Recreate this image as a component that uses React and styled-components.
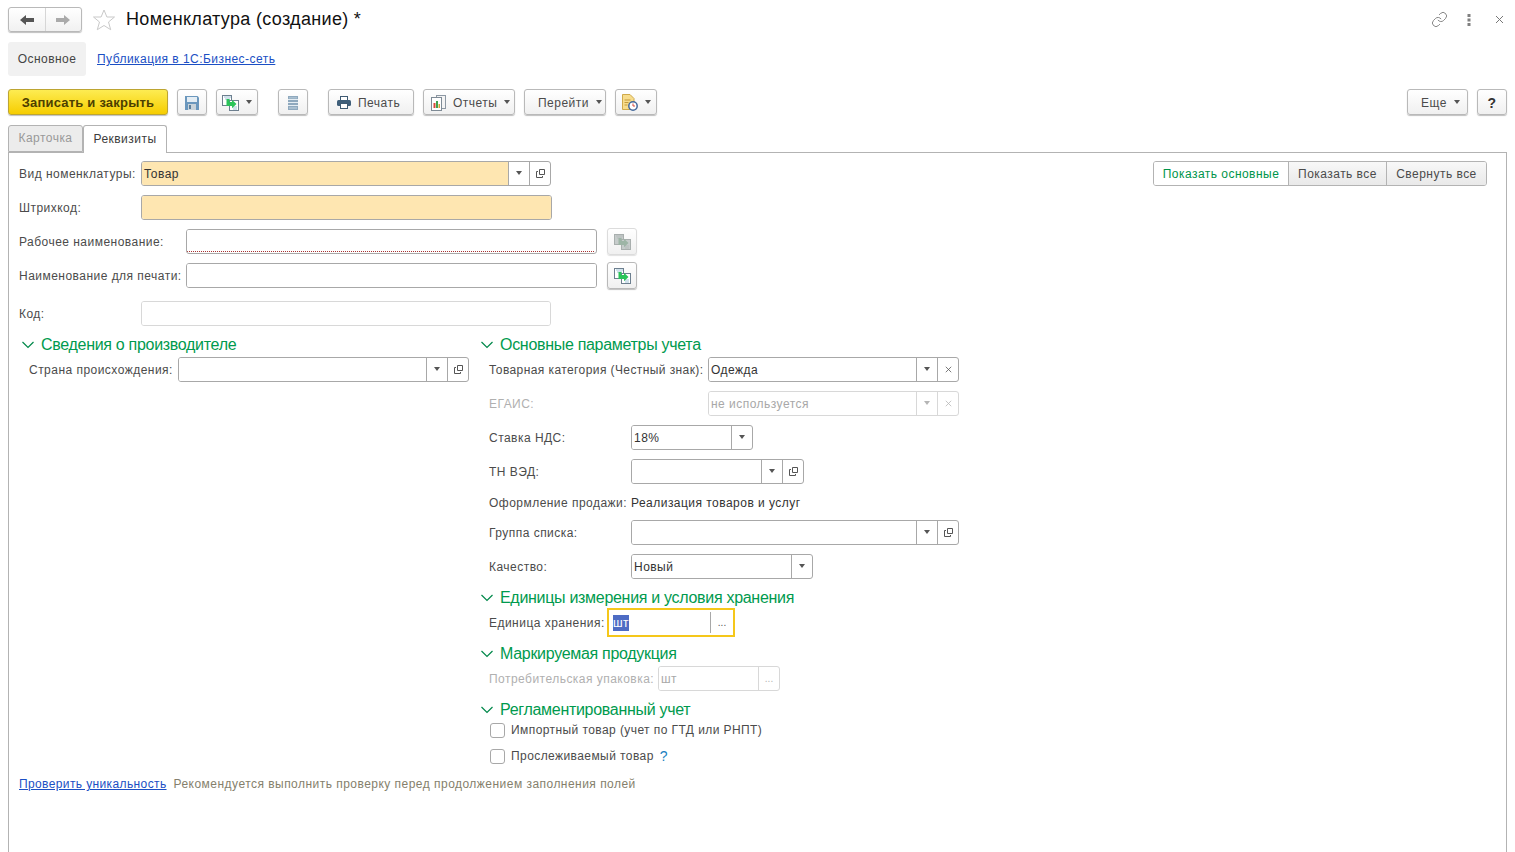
import React from "react";
import styled, { createGlobalStyle } from "styled-components";
import { Link } from "lucide-react";

const GlobalStyle = createGlobalStyle`
  html, body {
    margin: 0;
    height: 100%;
    background: #fff;
    overflow: hidden;
  }
  body {
    font-family: "Liberation Sans", Arial, sans-serif;
    font-size: 12px;
    letter-spacing: 0.47px;
    color: #4b4b4b;
  }
`;

const Page = styled.div`
  height: 852px;
  padding: 0 8px;
  box-sizing: border-box;
  display: flex;
  flex-direction: column;
`;

const Header = styled.div`
  display: flex;
  align-items: center;
  height: 25px;
  margin-top: 7px;
`;

const NavGroup = styled.div`
  display: flex;
  width: 74px;
  height: 25px;
  box-sizing: border-box;
  border: 1px solid #b9b9b9;
  border-radius: 3px;
  background: linear-gradient(#fff, #f1f1f1);
  box-shadow: 0 1px 1px rgba(0, 0, 0, 0.25);
`;

const NavButton = styled.div`
  flex: 1;
  display: flex;
  align-items: center;
  justify-content: center;
  & + & {
    border-left: 1px solid #d6d6d6;
  }
`;

const StarWrap = styled.div`
  display: flex;
  margin-left: 10px;
`;

const Title = styled.h1`
  margin: 0 0 0 10px;
  font-size: 18px;
  font-weight: 400;
  letter-spacing: 0.32px;
  color: #111;
`;

const WindowIcons = styled.div`
  margin-left: auto;
  margin-right: -7px;
  display: flex;
`;

const WindowIcon = styled.div`
  width: 30px;
  display: flex;
  align-items: center;
  justify-content: center;
`;

const SectionNav = styled.div`
  display: flex;
  align-items: center;
  height: 34px;
  margin-top: 10px;
`;

const SectionTab = styled.div`
  width: 78px;
  height: 34px;
  display: flex;
  align-items: center;
  justify-content: center;
  background: #f1f1f1;
  border-radius: 3px;
  color: #444;
`;

const TextLink = styled.a`
  color: #1b4fc4;
  text-decoration: underline;
  margin-left: ${(p) => p.$left || 0}px;
  white-space: nowrap;
  letter-spacing: ${(p) => p.$spacing || 0.45}px;
`;

const Toolbar = styled.div`
  display: flex;
  align-items: flex-start;
  gap: 9px;
  margin-top: 13px;
  height: 27px;
`;

const Button = styled.div`
  width: ${(p) => p.$w}px;
  height: 26px;
  box-sizing: border-box;
  margin-left: ${(p) => p.$left || 0}px;
  padding-left: ${(p) => p.$pad || 0}px;
  padding-top: 1px;
  display: flex;
  align-items: center;
  justify-content: ${(p) => (p.$pad ? "flex-start" : "center")};
  gap: 7px;
  border: 1px solid #b9b9b9;
  border-radius: 3px;
  background: linear-gradient(#fff, #f0f0f0);
  box-shadow: 0 1px 1px rgba(0, 0, 0, 0.25);
  color: #4b4b4b;
  white-space: nowrap;
`;

const PrimaryButton = styled(Button)`
  padding-top: 0;
  background: linear-gradient(#fdec52, #f6cd00);
  border-color: #bda532;
  color: #4d3f00;
  font-size: 13px;
  font-weight: 700;
  letter-spacing: 0.2px;
`;

const PushRight = styled.div`
  margin-left: auto;
  display: flex;
  gap: 9px;
`;

const HelpMark = styled.span`
  font-size: 14px;
  font-weight: 700;
  color: #333;
`;

const Caret = styled.span`
  display: inline-block;
  width: 0;
  height: 0;
  margin-bottom: 1px;
  border-left: 3.5px solid transparent;
  border-right: 3.5px solid transparent;
  border-top: 4px solid ${(p) => (p.$off ? "#b5b5b5" : "#555")};
`;

const Tabs = styled.div`
  display: flex;
  margin-top: 9px;
  height: 27px;
  align-items: flex-start;
`;

const Tab = styled.div`
  position: relative;
  z-index: 1;
  width: ${(p) => p.$w}px;
  height: ${(p) => (p.$active ? 28 : 27)}px;
  box-sizing: border-box;
  padding-bottom: ${(p) => (p.$active ? 2 : 1)}px;
  display: flex;
  align-items: center;
  justify-content: center;
  border: 1px solid #b3b3b3;
  border-bottom: ${(p) => (p.$active ? "none" : "1px solid #b3b3b3")};
  border-radius: 3px 3px 0 0;
  background: ${(p) => (p.$active ? "#fff" : "#ececec")};
  color: ${(p) => (p.$active ? "#3c3c3c" : "#999")};
`;

const Panel = styled.div`
  flex: 1;
  border: 1px solid #b3b3b3;
  border-bottom: none;
  padding: 8px 19px 0 10px;
`;

const TopArea = styled.div`
  display: flex;
  justify-content: space-between;
  align-items: flex-start;
`;

const Segmented = styled.div`
  display: flex;
  height: 25px;
  box-sizing: border-box;
  border: 1px solid #b3b3b3;
  border-radius: 3px;
  overflow: hidden;
`;

const Segment = styled.div`
  width: ${(p) => p.$w}px;
  box-sizing: border-box;
  display: flex;
  align-items: center;
  justify-content: center;
  background: ${(p) => (p.$active ? "#fff" : "linear-gradient(#f8f8f8, #e9e9e9)")};
  color: ${(p) => (p.$active ? "#00944a" : "#4b4b4b")};
  white-space: nowrap;
  & + & {
    border-left: 1px solid #b3b3b3;
  }
`;

const Row = styled.div`
  display: flex;
  align-items: center;
  height: ${(p) => p.$h || 25}px;
  margin-top: ${(p) => p.$top || 0}px;
  padding-left: ${(p) => p.$indent || 0}px;
`;

const Label = styled.div`
  width: ${(p) => p.$w}px;
  flex: none;
  white-space: nowrap;
  color: ${(p) => (p.$off ? "#b0b0b0" : "#4b4b4b")};
  letter-spacing: ${(p) => p.$spacing || 0.47}px;
`;

const Field = styled.div`
  width: ${(p) => p.$w}px;
  height: 25px;
  box-sizing: border-box;
  display: flex;
  border: 1px solid ${(p) => (p.$off ? "#d8d8d8" : "#a8a8a8")};
  border-radius: 3px;
  overflow: hidden;
  background: #fff;
`;

const FieldText = styled.div`
  flex: 1;
  display: flex;
  align-items: center;
  padding-left: 2px;
  box-sizing: border-box;
  background: ${(p) => (p.$warm ? "#fee6b1" : "#fff")};
  color: ${(p) => (p.$off ? "#a8a8a8" : "#333")};
  border-bottom: ${(p) => (p.$required ? "1px dotted #a83232" : "none")};
  margin: ${(p) => (p.$required ? "0 2px 1px 0" : "0")};
`;

const FieldButton = styled.div`
  width: 21px;
  box-sizing: border-box;
  flex: none;
  display: flex;
  align-items: center;
  justify-content: center;
  border-left: 1px solid ${(p) => (p.$off ? "#d8d8d8" : "#a8a8a8")};
  color: ${(p) => (p.$off ? "#b5b5b5" : "#555")};
  font-size: 10px;
  letter-spacing: 0;
`;

const SideButton = styled(Button)`
  width: 30px;
  height: 27px;
  margin-left: 10px;
  border-color: ${(p) => (p.$off ? "#dcdcdc" : "#b9b9b9")};
  box-shadow: 0 1px 1px rgba(0, 0, 0, ${(p) => (p.$off ? 0.12 : 0.25)});
`;

const Columns = styled.div`
  display: grid;
  grid-template-columns: 459px 1fr;
  margin-top: 8px;
`;

const Heading = styled.div`
  display: flex;
  align-items: center;
  gap: 6px;
  height: 20px;
  box-sizing: border-box;
  padding: 2px 0 0 2px;
  margin-top: ${(p) => p.$top || 0}px;
  font-size: 16px;
  letter-spacing: -0.3px;
  color: #009a4e;
`;

const PlainValue = styled.div`
  color: #333;
`;

const FocusField = styled.div`
  width: 128px;
  height: 29px;
  box-sizing: border-box;
  display: flex;
  align-items: center;
  border: 2px solid #f5c71a;
`;

const FocusText = styled.div`
  flex: 1;
  padding-left: 4px;
`;

const Selected = styled.span`
  background: #4e6cc4;
  color: #fff;
  display: inline-block;
  line-height: 16px;
`;

const FocusButton = styled.div`
  width: 22px;
  height: 21px;
  display: flex;
  align-items: center;
  justify-content: center;
  border-left: 1px solid #a8a8a8;
  color: #555;
  font-size: 10px;
  letter-spacing: 0;
`;

const CheckRow = styled(Row)`
  gap: 6px;
  padding-left: 12px;
  letter-spacing: 0.42px;
`;

const Checkbox = styled.span`
  width: 15px;
  height: 15px;
  box-sizing: border-box;
  border: 1px solid #a8a8a8;
  border-radius: 3px;
  background: #fff;
`;

const Hint = styled.span`
  color: #1c7fc0;
  font-size: 14px;
`;

const Footer = styled(Row)`
  height: 20px;
  margin-top: 7px;
  padding-top: 1px;
`;

const Note = styled.span`
  color: #857f6c;
  margin-left: 7px;
`;

/* иконки */
const ArrowIcon = ({ right, color }) => (
  <svg width="16" height="12" viewBox="0 0 16 12" style={{ transform: right ? "scaleX(-1)" : "none" }}>
    <path d="M1 6 7 1v3h8v4H7v3z" fill={color} />
  </svg>
);

const StarIcon = () => (
  <svg width="24" height="24" viewBox="0 0 24 24">
    <path d="M12 2l2.9 7h7.6l-6 5 2.2 7.700L12 17.500l-6.700 4.200L7.500 14l-6-5h7.600z" fill="#fff" stroke="#c9c9c9" />
  </svg>
);

const DotsIcon = () => (
  <svg width="4" height="12" viewBox="0 0 4 12">
    <rect x="0.500" y="0" width="3" height="3" fill="#808080" />
    <rect x="0.500" y="4.500" width="3" height="3" fill="#808080" />
    <rect x="0.500" y="9" width="3" height="3" fill="#808080" />
  </svg>
);

const CloseIcon = ({ size = 9, color = "#777" }) => (
  <svg width={size} height={size} viewBox="0 0 9 9">
    <path d="M1 1l7 7M8 1 1 8" stroke={color} fill="none" />
  </svg>
);

const OpenIcon = () => (
  <svg width="9" height="9" viewBox="0 0 9 9">
    <path d="M3.500.500h5v5h-5zM2 2.500H.500v6h6V7" fill="none" stroke="#555" />
  </svg>
);

const SaveIcon = () => (
  <svg width="14" height="14" viewBox="0 0 14 14">
    <path d="M0 0h12.500L14 1.500V14H0z" fill="#6b97bd" />
    <rect x="2" y="1" width="10" height="5" fill="#e4edf4" />
    <rect x="3" y="8" width="8" height="6" fill="#c9d3da" />
    <rect x="4" y="9" width="2" height="4" fill="#5c7f9d" />
  </svg>
);

const CopyIcon = ({ off }) => (
  <svg width="17" height="16" viewBox="0 0 17 16">
    <rect x="0.500" y="0.500" width="9" height="10" fill={off ? "#c6cccb" : "#fff"} stroke={off ? "#a9afae" : "#6d7f8f"} />
    <rect x="7.500" y="5.500" width="9" height="10" fill={off ? "#c6cccb" : "#fff"} stroke={off ? "#a9afae" : "#6d7f8f"} />
    <path d="M2 2h7v-0M3 4h5M11 12h4M11 14h4" stroke={off ? "#b5bbba" : "#9fc2d6"} />
    <path d="M4.500 4h3v3h2.500V4.800l4.500 4.200-4.500 4.200v-2.200H4.500z" fill={off ? "#9db5a6" : "#2bc45a"} />
  </svg>
);

const ListIcon = () => (
  <svg width="10" height="14" viewBox="0 0 10 14">
    <rect x="0" y="0" width="10" height="14" fill="#8fa9be" />
    <path d="M0 3.500h10M0 6.500h10M0 9.500h10" stroke="#e5edf3" />
    <rect x="1" y="1" width="8" height="1.500" fill="#a9bfd0" />
    <rect x="1" y="11" width="8" height="2" fill="#a9bfd0" />
  </svg>
);

const PrinterIcon = () => (
  <svg width="14" height="13" viewBox="0 0 14 13">
    <rect x="3.500" y="0.500" width="7" height="4" fill="#fff" stroke="#3f5b73" />
    <rect x="0" y="4" width="14" height="6" rx="1.500" fill="#3f5f7a" />
    <rect x="3.500" y="7.500" width="7" height="5" fill="#fff" stroke="#3f5b73" />
  </svg>
);

const ReportsIcon = () => (
  <svg width="15" height="16" viewBox="0 0 15 16">
    <rect x="5.500" y="0.500" width="9" height="13" fill="#f4f4f4" stroke="#8d98a3" />
    <rect x="0.500" y="2.500" width="10" height="13" fill="#fff" stroke="#7f8b96" />
    <rect x="2.500" y="8" width="2" height="5" fill="#d9493b" />
    <rect x="5" y="6" width="2" height="7" fill="#3fa34d" />
    <rect x="7.500" y="9" width="1.500" height="4" fill="#d9a23b" />
  </svg>
);

const DocClockIcon = () => (
  <svg width="16" height="17" viewBox="0 0 16 17">
    <path d="M.5.500h7.500l4 4v11H.5z" fill="#f7dc8c" stroke="#cfa94a" />
    <path d="M2.500 6h6M2.500 8.500h4M2.500 11h3" stroke="#c39a3a" />
    <circle cx="11" cy="12" r="4.200" fill="#fff" stroke="#44689a" strokeWidth="1.500" />
    <path d="M11 9.500V12h2" fill="none" stroke="#d9493b" />
  </svg>
);

const ChevronIcon = () => (
  <svg width="14" height="8" viewBox="0 0 14 8">
    <path d="M1.500 1 7 6.500 12.500 1" fill="none" stroke="#00884a" strokeWidth="1.200" />
  </svg>
);

const Section = ({ top, title }) => (
  <Heading $top={top}>
    <ChevronIcon />
    {title}
  </Heading>
);

export default function App() {
  return (
    <>
      <GlobalStyle />
      <Page>
        <Header>
          <NavGroup>
            <NavButton>
              <ArrowIcon color="#555" />
            </NavButton>
            <NavButton>
              <ArrowIcon right color="#aaa" />
            </NavButton>
          </NavGroup>
          <StarWrap>
            <StarIcon />
          </StarWrap>
          <Title>Номенклатура (создание) *</Title>
          <WindowIcons>
            <WindowIcon>
              <Link size={17} strokeWidth={1.1} color="#666" />
            </WindowIcon>
            <WindowIcon>
              <DotsIcon />
            </WindowIcon>
            <WindowIcon>
              <CloseIcon />
            </WindowIcon>
          </WindowIcons>
        </Header>

        <SectionNav>
          <SectionTab>Основное</SectionTab>
          <TextLink $left={11}>Публикация в 1С:Бизнес-сеть</TextLink>
        </SectionNav>

        <Toolbar>
          <PrimaryButton $w={160}>Записать и закрыть</PrimaryButton>
          <Button $w={30}>
            <SaveIcon />
          </Button>
          <Button $w={42}>
            <CopyIcon />
            <Caret />
          </Button>
          <Button $w={30} $left={11}>
            <ListIcon />
          </Button>
          <Button $w={86} $left={11} $pad={8}>
            <PrinterIcon />
            Печать
          </Button>
          <Button $w={92} $pad={7}>
            <ReportsIcon />
            Отчеты
            <Caret />
          </Button>
          <Button $w={82} $pad={13}>
            Перейти
            <Caret />
          </Button>
          <Button $w={42}>
            <DocClockIcon />
            <Caret />
          </Button>
          <PushRight>
            <Button $w={61} $pad={13}>
              Еще
              <Caret />
            </Button>
            <Button $w={30}>
              <HelpMark>?</HelpMark>
            </Button>
          </PushRight>
        </Toolbar>

        <Tabs>
          <Tab $w={75}>Карточка</Tab>
          <Tab $w={84} $active>
            Реквизиты
          </Tab>
        </Tabs>

        <Panel>
          <TopArea>
            <div>
              <Row>
                <Label $w={122}>Вид номенклатуры:</Label>
                <Field $w={410}>
                  <FieldText $warm>Товар</FieldText>
                  <FieldButton>
                    <Caret />
                  </FieldButton>
                  <FieldButton>
                    <OpenIcon />
                  </FieldButton>
                </Field>
              </Row>
              <Row $top={9}>
                <Label $w={122}>Штрихкод:</Label>
                <Field $w={411}>
                  <FieldText $warm />
                </Field>
              </Row>
              <Row $top={9}>
                <Label $w={167}>Рабочее наименование:</Label>
                <Field $w={411}>
                  <FieldText $required />
                </Field>
                <SideButton $off>
                  <CopyIcon off />
                </SideButton>
              </Row>
              <Row $top={9}>
                <Label $w={167}>Наименование для печати:</Label>
                <Field $w={411}>
                  <FieldText />
                </Field>
                <SideButton>
                  <CopyIcon />
                </SideButton>
              </Row>
              <Row $top={13}>
                <Label $w={122}>Код:</Label>
                <Field $w={410} $off>
                  <FieldText />
                </Field>
              </Row>
            </div>
            <Segmented>
              <Segment $w={134} $active>
                Показать основные
              </Segment>
              <Segment $w={98}>Показать все</Segment>
              <Segment $w={100}>Свернуть все</Segment>
            </Segmented>
          </TopArea>

          <Columns>
            <div>
              <Section title="Сведения о производителе" />
              <Row $top={3} $indent={10}>
                <Label $w={149}>Страна происхождения:</Label>
                <Field $w={291}>
                  <FieldText />
                  <FieldButton>
                    <Caret />
                  </FieldButton>
                  <FieldButton>
                    <OpenIcon />
                  </FieldButton>
                </Field>
              </Row>
            </div>

            <div>
              <Section title="Основные параметры учета" />
              <Row $top={3} $indent={11}>
                <Label $w={219} $spacing={0.41}>
                  Товарная категория (Честный знак):
                </Label>
                <Field $w={251}>
                  <FieldText>Одежда</FieldText>
                  <FieldButton>
                    <Caret />
                  </FieldButton>
                  <FieldButton>
                    <CloseIcon size={7} color="#555" />
                  </FieldButton>
                </Field>
              </Row>
              <Row $top={9} $indent={11}>
                <Label $w={219} $off>
                  ЕГАИС:
                </Label>
                <Field $w={251} $off>
                  <FieldText $off>не используется</FieldText>
                  <FieldButton $off>
                    <Caret $off />
                  </FieldButton>
                  <FieldButton $off>
                    <CloseIcon size={7} color="#b5b5b5" />
                  </FieldButton>
                </Field>
              </Row>
              <Row $top={9} $indent={11}>
                <Label $w={142}>Ставка НДС:</Label>
                <Field $w={122}>
                  <FieldText>18%</FieldText>
                  <FieldButton>
                    <Caret />
                  </FieldButton>
                </Field>
              </Row>
              <Row $top={9} $indent={11}>
                <Label $w={142}>ТН ВЭД:</Label>
                <Field $w={173}>
                  <FieldText />
                  <FieldButton>
                    <Caret />
                  </FieldButton>
                  <FieldButton>
                    <OpenIcon />
                  </FieldButton>
                </Field>
              </Row>
              <Row $h={18} $top={10} $indent={11}>
                <Label $w={142}>Оформление продажи:</Label>
                <PlainValue>Реализация товаров и услуг</PlainValue>
              </Row>
              <Row $top={8} $indent={11}>
                <Label $w={142}>Группа списка:</Label>
                <Field $w={328}>
                  <FieldText />
                  <FieldButton>
                    <Caret />
                  </FieldButton>
                  <FieldButton>
                    <OpenIcon />
                  </FieldButton>
                </Field>
              </Row>
              <Row $top={9} $indent={11}>
                <Label $w={142}>Качество:</Label>
                <Field $w={182}>
                  <FieldText>Новый</FieldText>
                  <FieldButton>
                    <Caret />
                  </FieldButton>
                </Field>
              </Row>

              <Section top={8} title="Единицы измерения и условия хранения" />
              <Row $h={29} $top={1} $indent={11}>
                <Label $w={118}>Единица хранения:</Label>
                <FocusField>
                  <FocusText>
                    <Selected>шт</Selected>
                  </FocusText>
                  <FocusButton>...</FocusButton>
                </FocusField>
              </Row>

              <Section top={6} title="Маркируемая продукция" />
              <Row $top={3} $indent={11}>
                <Label $w={169} $off>
                  Потребительская упаковка:
                </Label>
                <Field $w={122} $off>
                  <FieldText $off>шт</FieldText>
                  <FieldButton $off>...</FieldButton>
                </Field>
              </Row>

              <Section top={8} title="Регламентированный учет" />
              <CheckRow $h={20} $top={1}>
                <Checkbox />
                Импортный товар (учет по ГТД или РНПТ)
              </CheckRow>
              <CheckRow $h={20} $top={6}>
                <Checkbox />
                Прослеживаемый товар
                <Hint>?</Hint>
              </CheckRow>
            </div>
          </Columns>

          <Footer>
            <TextLink $spacing={0.38}>Проверить уникальность</TextLink>
            <Note>Рекомендуется выполнить проверку перед продолжением заполнения полей</Note>
          </Footer>
        </Panel>
      </Page>
    </>
  );
}
